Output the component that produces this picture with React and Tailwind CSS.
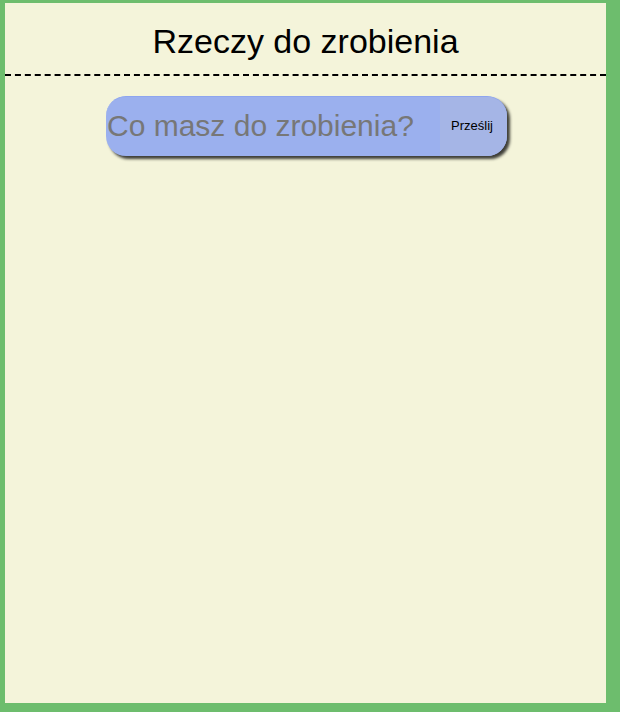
import React, { useState } from 'react';

const App = () => {
  const [text, setText] = useState('');

  return (
    <div className="min-h-[712px] bg-[#6dbd6d] pt-[3px] pl-[5px] font-['Liberation_Sans',Arial,sans-serif]">
      <div className="w-[601px] h-[700px] bg-[#f4f4da]">
        <header className="h-[73px] border-b-2 border-dashed border-black flex items-center justify-center">
          <h1 className="text-[34px] text-black leading-none mt-[5px]">Rzeczy do zrobienia</h1>
        </header>
        <div className="flex justify-center pt-[20px]">
          <form
            onSubmit={(e) => { e.preventDefault(); setText(''); }}
            className="ml-[2px] w-[401px] h-[60px] flex rounded-[20px] overflow-hidden bg-[#9bb0ee] border-t border-[#8ea5ef] shadow-[3px_3px_3px_rgba(0,0,0,0.75)]"
          >
            <input
              type="text"
              value={text}
              onChange={(e) => setText(e.target.value)}
              placeholder="Co masz do zrobienia?"
              className="flex-1 min-w-0 bg-transparent pl-[1px] pb-[2px] text-[30px] text-[#555] placeholder:text-[#777] outline-none"
            />
            <button type="submit" className="w-[67px] bg-[#a5b5e6] text-[13px] text-black pr-[3px] pb-[2px]">
              Prześlij
            </button>
          </form>
        </div>
      </div>
    </div>
  );
};

export default App;
